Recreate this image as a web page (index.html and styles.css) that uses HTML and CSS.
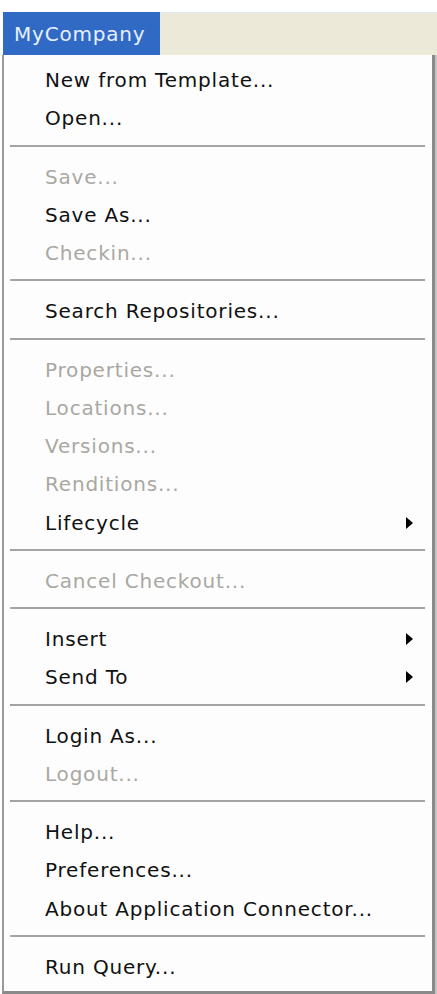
FILE: index.html
```html
<!DOCTYPE html>
<html lang="en">
<head>
  <meta charset="UTF-8" />
  <title>MyCompany Menu</title>
  <link rel="stylesheet" href="styles.css">
</head>
<body>
  <div class="menubar">
    <div class="menubar-item active">MyCompany</div>
  </div>

  <ul class="menu">
    <li class="item">New from Template...</li>
    <li class="item">Open...</li>
    <li class="sep"></li>
    <li class="item disabled">Save...</li>
    <li class="item">Save As...</li>
    <li class="item disabled">Checkin...</li>
    <li class="sep"></li>
    <li class="item">Search Repositories...</li>
    <li class="sep"></li>
    <li class="item disabled">Properties...</li>
    <li class="item disabled">Locations...</li>
    <li class="item disabled">Versions...</li>
    <li class="item disabled">Renditions...</li>
    <li class="item sub">Lifecycle</li>
    <li class="sep"></li>
    <li class="item disabled">Cancel Checkout...</li>
    <li class="sep"></li>
    <li class="item sub">Insert</li>
    <li class="item sub">Send To</li>
    <li class="sep"></li>
    <li class="item">Login As...</li>
    <li class="item disabled">Logout...</li>
    <li class="sep"></li>
    <li class="item">Help...</li>
    <li class="item">Preferences...</li>
    <li class="item">About Application Connector...</li>
    <li class="sep"></li>
    <li class="item">Run Query...</li>
  </ul>
</body>
</html>
```

FILE: styles.css
```css
body {
  margin: 0;
  padding-top: 12px;
  background: #ffffff;
  font-family: 'DejaVu Sans', Tahoma, sans-serif;
}

/* top menu bar */
.menubar {
  display: flex;
  height: 43px;
  margin-left: 3px;
  background: #ece9d8;
  border-top: 1px solid #dfe9f5;
  box-sizing: border-box;
}
.menubar-item {
  display: flex;
  align-items: center;
  padding: 0 10px 0 11px;
  font-size: 20px;
  letter-spacing: 0.8px;
  color: #2b2b2b;
}
.menubar-item.active {
  width: 157px;
  box-sizing: border-box;
  background: #316ac5;
  color: #e6f0ff;
  margin-top: -1px;
}

/* dropdown */
.menu {
  list-style: none;
  margin: 0 2px 0 2px;
  padding: 6px 0 5px 0;
  background: #fdfdfd;
  border-left: 2px solid #9a9a9a;
  border-right: 3px solid #8a8a8a;
  border-bottom: 3px solid #8a8a8a;
  box-shadow: 2px 0 0 #c4c4c4;
}
.item {
  position: relative;
  height: 38.25px;
  line-height: 38px;
  padding-left: 41px;
  font-size: 20px;
  letter-spacing: 0.8px;
  color: #111111;
  white-space: nowrap;
}
.item.disabled {
  color: #a9a8a2;
}
/* submenu arrow */
.item.sub::after {
  content: "";
  position: absolute;
  right: 19px;
  top: 13px;
  border-left: 7px solid #000;
  border-top: 6px solid transparent;
  border-bottom: 6px solid transparent;
}
.sep {
  height: 2px;
  margin: 7px 7px 11px 6px;
  background: #a4a4a4;
}
```
